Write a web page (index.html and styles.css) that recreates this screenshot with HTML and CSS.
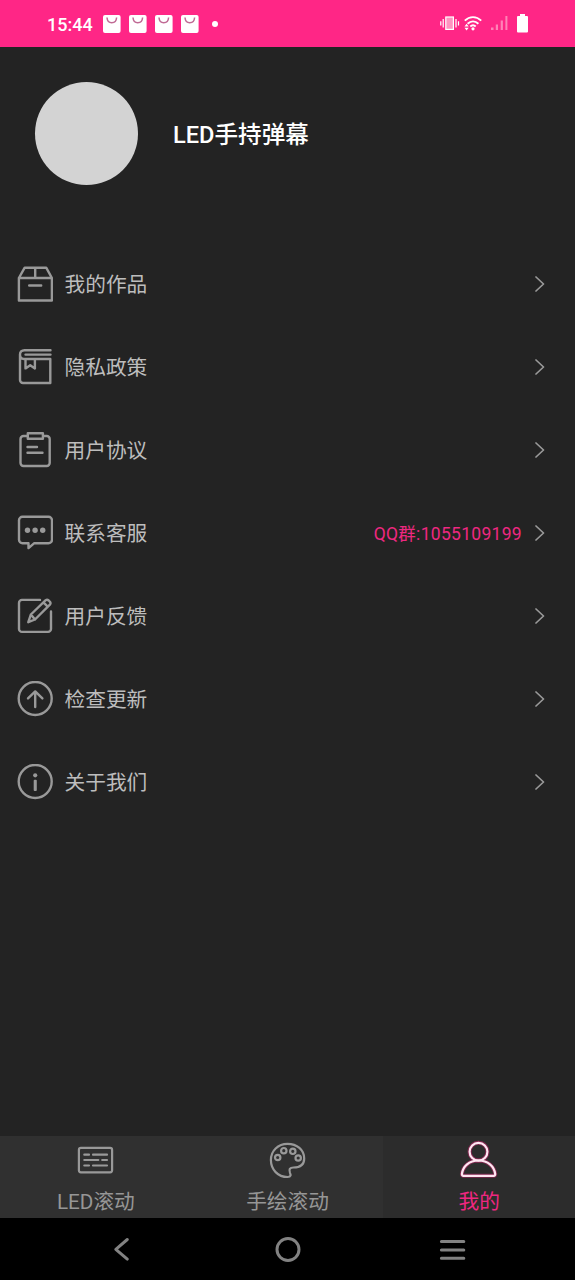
FILE: index.html
```html
<!DOCTYPE html>
<html lang="zh-CN">
<head>
<meta charset="utf-8">
<title>LED手持弹幕</title>
<link rel="stylesheet" href="styles.css">
</head>
<body>
<div class="screen">
  <header class="status">
    <span class="clock">15:44</span>
    <div class="notices">
      <svg class="bag" viewBox="0 0 18 18"><rect width="17.600" height="18" rx="2"/><path d="M4 2.500c.4 7 9.200 7 9.600 0"/></svg>
      <svg class="bag" viewBox="0 0 18 18"><rect width="17.600" height="18" rx="2"/><path d="M4 2.500c.4 7 9.200 7 9.600 0"/></svg>
      <svg class="bag" viewBox="0 0 18 18"><rect width="17.600" height="18" rx="2"/><path d="M4 2.500c.4 7 9.200 7 9.600 0"/></svg>
      <svg class="bag" viewBox="0 0 18 18"><rect width="17.600" height="18" rx="2"/><path d="M4 2.500c.4 7 9.200 7 9.600 0"/></svg>
    </div>
    <i class="dot"></i>
    <svg class="system" viewBox="440 12 90 24">
      <g fill="none" stroke="#fff" stroke-width="1.2">
        <rect x="445.8" y="17" width="7.6" height="12.4" fill="#ff93c0"/>
        <path d="M443.2 19v8.500M440.800 21.200v4.400M456 19v8.500M458.500 21.200v4.400"/>
      </g>
      <g fill="none" stroke="#fff" stroke-width="1.9">
        <path d="M464.800 20.600c4.800-4.700 11.600-4.700 16.400 0M467.600 23.700c3.300-3.100 7.500-3.100 10.800 0M470.300 26.500c1.600-1.500 3.800-1.500 5.400 0"/>
      </g>
      <g fill="#fff"><circle cx="473" cy="28.800" r="1.600"/><path d="M464.500 26.600l2.100-2.800 2.100 2.800zM464.500 27.700h4.200l-2.100 2.800z"/></g>
      <g fill="#ff83b7"><path d="M491 27.500h2.500V30H491zM495.800 24.500h2.200V30h-2.200zM500.700 20.500h2.200V30h-2.200zM505.400 16h2v14h-2z"/></g>
      <path fill="#fff" d="M520 14h5v2h2a1 1 0 0 1 1 1v14.500a1 1 0 0 1-1 1h-9a1 1 0 0 1-1-1V17a1 1 0 0 1 1-1h2z"/>
    </svg>
  </header>

  <section class="profile">
    <div class="avatar"></div>
    <h1 class="name">LED手持弹幕</h1>
  </section>

  <main class="menu">
    <div class="row">
      <svg class="icon" viewBox="0 0 36 36"><path d="M1.900 12v22.500h33V12zM1.900 12 7.700 1.700h21.500L34.900 12M18.200 1.700V12M12.200 19.500h12"/></svg>
      <span class="label">我的作品</span>
      <svg class="arrow" viewBox="0 0 10 16"><path d="M1 1l7.500 7L1 15"/></svg>
    </div>
    <div class="row">
      <svg class="icon" viewBox="0 0 36 36"><path d="M33.500 1.200H7.500C4.500 1.200 3 3 3 5.600V31a3 3 0 0 0 3 3h27.300V10H7C4.500 10 3 8 3 5.600M33.500 5.600H8.500M8.500 10v9.400l4.700-3.200 4.700 3.200V10"/></svg>
      <span class="label">隐私政策</span>
      <svg class="arrow" viewBox="0 0 10 16"><path d="M1 1l7.500 7L1 15"/></svg>
    </div>
    <div class="row">
      <svg class="icon" viewBox="0 0 36 36"><path d="M10.800 4H6.500a3 3 0 0 0-3 3v24a3 3 0 0 0 3 3h23.200a3 3 0 0 0 3-3V7a3 3 0 0 0-3-3h-3.800M10.800 1.200h15.100v5.500H10.800zM10.500 15H20M10.500 20.800h15"/></svg>
      <span class="label">用户协议</span>
      <svg class="arrow" viewBox="0 0 10 16"><path d="M1 1l7.500 7L1 15"/></svg>
    </div>
    <div class="row">
      <svg class="icon" viewBox="0 0 36 36"><path d="M5.500 1.800h26a3.500 3.500 0 0 1 3.500 3.500v19.500a3.500 3.500 0 0 1-3.500 3.500H17l-5.500 4.800v-4.800h-6A3.500 3.500 0 0 1 2 24.800V5.300a3.500 3.500 0 0 1 3.500-3.500z"/><g class="solid"><circle cx="10.500" cy="15.300" r="2.700"/><circle cx="18.100" cy="15.300" r="2.700"/><circle cx="25.700" cy="15.300" r="2.700"/></g></svg>
      <span class="label">联系客服</span>
      <span class="group">QQ群:1055109199</span>
      <svg class="arrow" viewBox="0 0 10 16"><path d="M1 1l7.500 7L1 15"/></svg>
    </div>
    <div class="row">
      <svg class="icon" viewBox="0 0 36 36"><path d="M23 1.900H5a3 3 0 0 0-3 3v26a3 3 0 0 0 3 3h26a3 3 0 0 0 3-3V13.500M11.300 24.200l2.600-7.700L28.700 2.200q1.500-1 3 .3l1.200 1.300q1.200 1.500 0 2.800L18 21.500zM26.400 4.400l4.300 4.300M13.900 16.500l4.100 5"/></svg>
      <span class="label">用户反馈</span>
      <svg class="arrow" viewBox="0 0 10 16"><path d="M1 1l7.500 7L1 15"/></svg>
    </div>
    <div class="row">
      <svg class="icon" viewBox="0 0 36 36"><circle cx="18.200" cy="17.500" r="16.500"/><path d="M18.200 26V10.700M11 17.400l7.200-7 7.200 7"/></svg>
      <span class="label">检查更新</span>
      <svg class="arrow" viewBox="0 0 10 16"><path d="M1 1l7.500 7L1 15"/></svg>
    </div>
    <div class="row">
      <svg class="icon" viewBox="0 0 36 36"><circle cx="18.200" cy="17.500" r="16.500"/><g class="solid"><circle cx="18.200" cy="11.300" r="2.100"/><rect x="16.700" y="15.700" width="3.100" height="11.300" rx="1"/></g></svg>
      <span class="label">关于我们</span>
      <svg class="arrow" viewBox="0 0 10 16"><path d="M1 1l7.500 7L1 15"/></svg>
    </div>
  </main>

  <nav class="tabs">
    <div class="tab">
      <svg class="tab-icon" viewBox="0 0 40 40"><rect x="2.900" y="7.900" width="33.200" height="24.400" rx="2"/><path d="M8.300 14.700h4.700M17 14.700h14M8.300 20h14M26.200 20H31M8.300 25.500h4.700M17 25.500h14"/></svg>
      <span>LED滚动</span>
    </div>
    <div class="tab">
      <svg class="tab-icon" viewBox="0 0 40 40"><path d="M19.500 3.800C10 3.800 2.900 10.800 2.900 20.100c0 9.500 7 16.900 16.700 16.900 3.500 0 3.300-2 2.400-4.200-1.300-3.500-.3-5.300 3.500-5.300 6.500 0 10.700-3 10.700-9C36.200 9.800 29 3.800 19.500 3.800z"/><circle cx="9.700" cy="17.500" r="2.700"/><circle cx="15.800" cy="10.700" r="2.700"/><circle cx="24.800" cy="11.300" r="2.700"/><circle cx="30.200" cy="18" r="2.700"/></svg>
      <span>手绘滚动</span>
    </div>
    <div class="tab active">
      <svg class="tab-icon" viewBox="0 0 40 40"><g class="halo"><circle cx="19.500" cy="11.700" r="8.900"/><path d="M19.500 20.500c-9.500 0-15.500 6-16.600 13.300q-.2 2 1.700 2h30q1.800 0 1.600-2c-1.100-7.300-7.200-13.300-16.700-13.300z"/></g><circle cx="19.500" cy="11.700" r="8.900"/><path d="M19.500 20.500c-9.500 0-15.500 6-16.600 13.300q-.2 2 1.700 2h30q1.800 0 1.600-2c-1.100-7.300-7.200-13.300-16.700-13.300z"/></svg>
      <span>我的</span>
    </div>
  </nav>

  <footer class="system-nav">
    <svg viewBox="0 0 30 30"><path d="M19.300 5.500 7.800 15.300l11.500 9.800"/></svg>
    <svg viewBox="0 0 30 30"><circle cx="15" cy="15.500" r="11"/></svg>
    <svg viewBox="0 0 30 30"><path d="M3.400 7.600h22.400M3.400 15.900h22.400M3.400 24.200h22.400"/></svg>
  </footer>
</div>
</body>
</html>
```
FILE: styles.css
```css
* { box-sizing: border-box; }
body { margin: 0; background: #232323; font-family: Roboto, "Noto Sans CJK SC", sans-serif; }
.screen { display: flex; flex-direction: column; width: 575px; height: 1280px; background: #232323; }
svg { display: block; flex: none; }

.status { display: flex; align-items: center; height: 47px; padding-left: 47px; background: #ff2686; color: #fff; }
.clock { width: 55.500px; font-size: 18px; font-weight: 500; line-height: 20px; padding-top: 2px; }
.notices { display: flex; gap: 8px; }
.bag { width: 18px; height: 18px; fill: #fff; }
.bag path { fill: none; stroke: #c06a95; stroke-width: 1.500; }
.dot { width: 6px; height: 6px; margin-left: 13.500px; border-radius: 50%; background: #fff; }
.system { width: 90px; height: 24px; margin: 0 45px 0 auto; }

.profile { display: flex; align-items: center; gap: 35px; height: 196px; padding: 0 35px 24px; }
.avatar { width: 103px; height: 103px; border-radius: 50%; background: #d3d3d3; }
.name { margin: 0; padding-top: 3px; color: #fff; font-size: 23.600px; font-weight: 500; line-height: 34px; }

.menu { flex: 1; }
.row { display: flex; align-items: center; height: 82.900px; padding: 0 30px 0 17px; }
.icon { width: 36px; height: 36px; margin-right: 11.500px; fill: none; stroke: #999; stroke-width: 2.400; stroke-linejoin: round; stroke-linecap: round; }
.solid { fill: #999; stroke: none; }
.label { padding-top: 2px; color: #bdbdbd; font-size: 20.700px; line-height: 30px; white-space: nowrap; }
.group { margin-left: auto; padding-top: 1px; color: #ee2880; font-size: 17.500px; line-height: 26px; letter-spacing: .3px; }
.arrow { width: 10px; height: 16px; margin-left: auto; fill: none; stroke: #999; stroke-width: 1.700; stroke-linecap: round; stroke-linejoin: round; }
.group + .arrow { margin-left: 13px; }

.tabs { display: flex; height: 82px; background: #303030; color: #969696; }
.tab { flex: 1; display: flex; flex-direction: column; align-items: center; padding-top: 4px; font-size: 20.700px; line-height: 30px; }
.tab-icon { width: 40px; height: 40px; margin-bottom: 7px; fill: none; stroke: #999; stroke-width: 2.200; stroke-linecap: round; stroke-linejoin: round; }
.active { background: #2c2c2c; color: #ef2781; }
.active .tab-icon { stroke: #ffe6f2; }
.halo { stroke: #ff2686; stroke-width: 4; opacity: .4; }

.system-nav { display: flex; align-items: center; justify-content: center; gap: 135px; height: 62px; background: #000; }
.system-nav svg { width: 30px; height: 30px; fill: none; stroke: #828282; stroke-width: 3; stroke-linecap: round; stroke-linejoin: round; }
```
